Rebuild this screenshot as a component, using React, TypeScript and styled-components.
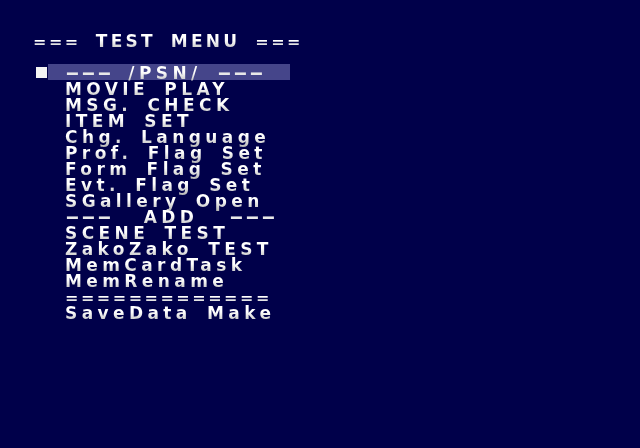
import React from "react";
import styled, { createGlobalStyle } from "styled-components";

const GlobalStyle = createGlobalStyle`
  html, body {
    margin: 0;
    padding: 0;
    background: #00004a;
  }
`;

const items = [
  "--- /PSN/ ---",
  "MOVIE PLAY",
  "MSG. CHECK",
  "ITEM SET",
  "Chg. Language",
  "Prof. Flag Set",
  "Form Flag Set",
  "Evt. Flag Set",
  "SGallery Open",
  "---  ADD  ---",
  "SCENE TEST",
  "ZakoZako TEST",
  "MemCardTask",
  "MemRename",
  "=============",
  "SaveData Make",
];

// split a label into runs so dashes and equals get their own pitch
const splitRuns = (text: string) => {
  const runs: { kind: "dash" | "eq" | "text"; value: string }[] = [];
  for (const ch of text) {
    const kind = ch === "-" ? "dash" : ch === "=" ? "eq" : "text";
    const last = runs[runs.length - 1];
    if (last && last.kind === kind) last.value += ch;
    else runs.push({ kind, value: ch });
  }
  return runs;
};

const GameText: React.FC<{ text: string }> = ({ text }) => (
  <>
    {splitRuns(text).map((run, i) => {
      if (run.kind === "dash")
        return (
          <React.Fragment key={i}>
            {run.value.split("").map((d, j) => (
              <Dash key={j}>
                <span>{d}</span>
              </Dash>
            ))}
          </React.Fragment>
        );
      if (run.kind === "eq") return <EqRun key={i}>{run.value}</EqRun>;
      return <TextRun key={i}>{run.value}</TextRun>;
    })}
  </>
);

const App: React.FC = () => {
  const selected = 0;
  return (
    <Screen>
      <GlobalStyle />
      <Title>
        <GameText text="=== TEST MENU ===" />
      </Title>
      <Menu>
        {items.map((label, idx) => (
          <Row key={idx}>
            <CursorCell>{idx === selected && <Cursor />}</CursorCell>
            <Label $active={idx === selected}>
              <GameText text={label} />
            </Label>
          </Row>
        ))}
      </Menu>
    </Screen>
  );
};

const Screen = styled.div`
  width: 640px;
  height: 448px;
  box-sizing: border-box;
  padding: 32px 0 0 32px;
  background: #00004a;
  font-family: "DejaVu Sans", sans-serif;
  font-weight: 700;
  font-size: 17px;
  color: #f2f2f2;
  overflow: hidden;
`;

const Title = styled.div`
  height: 16px;
  line-height: 18px;
  padding-left: 1px;
  white-space: pre;
  --ls: 3.2px;
  word-spacing: 6px;
`;

const Menu = styled.div`
  margin-top: 16px;
  display: flex;
  flex-direction: column;
`;

const Row = styled.div`
  display: flex;
  height: 16px;
`;

const CursorCell = styled.div`
  width: 16px;
  display: flex;
  align-items: center;
  justify-content: center;
`;

const Cursor = styled.div`
  width: 11px;
  height: 11px;
  margin-left: 2px;
  background: #f4f4f4;
`;

const Label = styled.div<{ $active: boolean }>`
  width: 242px;
  height: 16px;
  line-height: 18px;
  padding-left: 17px;
  box-sizing: border-box;
  white-space: pre;
  --ls: 4.4px;
  word-spacing: 5px;
  background: ${(p) => (p.$active ? "#45458a" : "transparent")};
`;

const TextRun = styled.span`
  letter-spacing: var(--ls);
  background: linear-gradient(#ffffff 45%, #b4b4b4);
  -webkit-background-clip: text;
  background-clip: text;
  color: transparent;
`;

const EqRun = styled.span`
  letter-spacing: 2.5px;
  font-size: 16px;
  background: linear-gradient(#ffffff 45%, #b4b4b4);
  -webkit-background-clip: text;
  background-clip: text;
  color: transparent;
`;

const Dash = styled.span`
  display: inline-block;
  width: 16px;
  text-align: center;
  span {
    display: inline-block;
    transform: scaleX(2.1);
    color: #e8e8e8;
  }
`;

export default App;
